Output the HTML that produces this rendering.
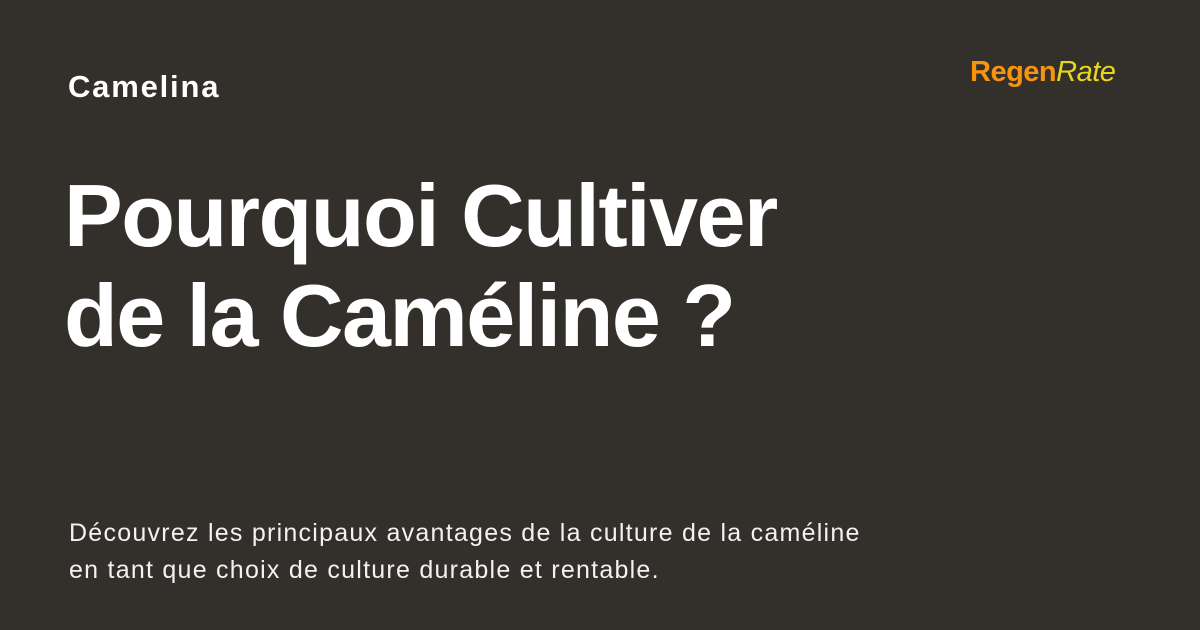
<!DOCTYPE html>
<html><head><meta charset="utf-8"><style>
html,body{margin:0;padding:0}
body{width:1200px;height:630px;background:#33302c;position:relative;overflow:hidden;font-family:"Liberation Sans",sans-serif;color:#fff}
.cat{position:absolute;left:68px;top:69px;font-size:31px;font-weight:bold;letter-spacing:1.8px}
.logo{position:absolute;left:970px;top:56px;font-size:29px;letter-spacing:-0.5px}
.logo b{color:#f7930f;font-weight:600}
.logo i{color:#e8d61e;font-weight:normal}
h1{position:absolute;left:64px;top:166px;margin:0;font-size:88px;line-height:100px;font-weight:bold;letter-spacing:-1.5px}
.desc{position:absolute;left:69px;top:515px;font-size:25px;line-height:37px;color:#f2f2f2;letter-spacing:1.25px}
</style></head><body>
<div class="cat">Camelina</div>
<div class="logo"><b>Regen</b><i>Rate</i></div>
<h1>Pourquoi Cultiver<br>de la Caméline ?</h1>
<div class="desc">Découvrez les principaux avantages de la culture de la caméline<br>en tant que choix de culture durable et rentable.</div>
</body></html>
